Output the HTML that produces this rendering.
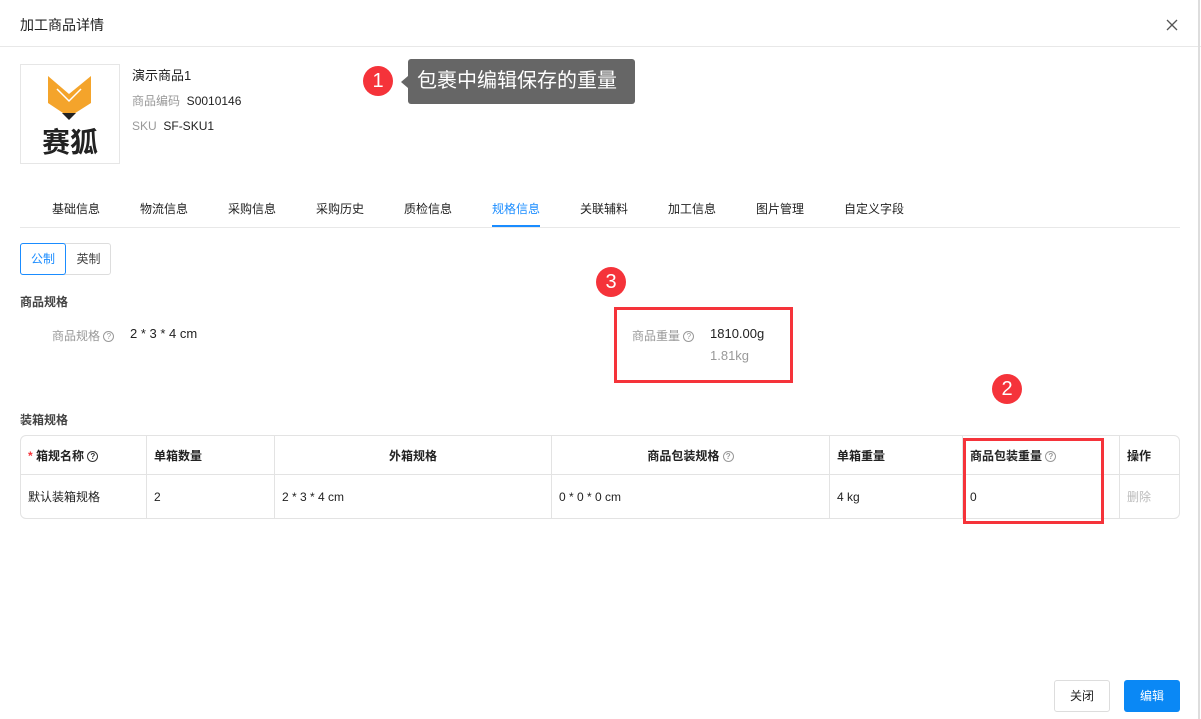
<!DOCTYPE html>
<html><head><meta charset="utf-8"><style>
*{box-sizing:border-box;margin:0;padding:0}
body{width:1201px;height:719px;background:#fff;font-family:"Liberation Sans","Noto Sans CJK SC",sans-serif;font-size:12px;color:#222;position:relative;overflow:hidden}
.a{position:absolute;white-space:nowrap}
.g{color:#999}
.q{display:inline-block;width:11px;height:11px;border:1px solid #999;border-radius:50%;font-size:8px;line-height:9px;text-align:center;color:#999;vertical-align:middle}
.badge{position:absolute;width:30px;height:30px;border-radius:50%;background:#f5333a;color:#fff;font-size:20px;line-height:30px;text-align:center}
.red{position:absolute;border:3px solid #f5333a}
table{position:absolute;left:20px;top:435px;width:1160px;border-collapse:separate;border-spacing:0;border:1px solid #e3e3e3;border-radius:6px}
td,th{border-right:1px solid #e3e3e3;padding:0 7px;text-align:left;font-size:12px}
th{height:39px;border-bottom:1px solid #e3e3e3;font-weight:bold}
td{height:43px}
td:last-child,th:last-child{border-right:none}
</style></head><body>
<div class="a" style="left:20px;top:15px;font-size:14px">加工商品详情</div>
<svg class="a" style="left:1166px;top:19px" width="12" height="12"><path d="M1 1L11 11M11 1L1 11" stroke="#555" stroke-width="1.3"/></svg>
<div class="a" style="left:0;top:46px;width:1201px;border-top:1px solid #e8e8e8"></div>
<div class="a" style="left:1198px;top:0;height:719px;border-left:2px solid #ddd"></div>
<div class="a" style="left:20px;top:64px;width:100px;height:100px;border:1px solid #e6e6e6">
<svg width="100" height="100" style="position:absolute;left:0;top:0"><path d="M27 11 L48 29 L70 11 L70 38 L48 52 L27 38Z" fill="#f4a42b"/><path d="M36 24 L48 36 L60 24" fill="none" stroke="#fff" stroke-width="1.5"/><path d="M41 48 L55 48 L48 55Z" fill="#222"/></svg>
<div class="a" style="left:21px;top:56px;font-size:28px;font-weight:bold;color:#222">赛狐</div></div>
<div class="a" style="left:132px;top:65px;font-size:13px">演示商品1</div>
<div class="a" style="left:132px;top:92px"><span class="g">商品编码</span>&nbsp; S0010146</div>
<div class="a" style="left:132px;top:119px"><span class="g">SKU</span>&nbsp; SF-SKU1</div>
<div class="badge" style="left:363px;top:66px">1</div>
<div class="a" style="left:401px;top:76px;border:6px solid transparent;border-right:7px solid #666;border-left:none"></div>
<div class="a" style="left:408px;top:59px;width:227px;height:45px;background:#666;border-radius:3px;color:#fff;font-size:20px;line-height:45px;padding-left:9px">包裹中编辑保存的重量</div>
<div class="a" style="left:20px;top:227px;width:1160px;border-top:1px solid #e8e8e8"></div>
<div class="a" style="left:52px;top:200px">基础信息</div>
<div class="a" style="left:140px;top:200px">物流信息</div>
<div class="a" style="left:228px;top:200px">采购信息</div>
<div class="a" style="left:316px;top:200px">采购历史</div>
<div class="a" style="left:404px;top:200px">质检信息</div>
<div class="a" style="left:492px;top:200px;color:#1a8cff">规格信息</div>
<div class="a" style="left:492px;top:225px;width:48px;height:2px;background:#1a8cff"></div>
<div class="a" style="left:580px;top:200px">关联辅料</div>
<div class="a" style="left:668px;top:200px">加工信息</div>
<div class="a" style="left:756px;top:200px">图片管理</div>
<div class="a" style="left:844px;top:200px">自定义字段</div>
<div class="a" style="left:20px;top:243px;width:91px;height:32px;border:1px solid #ddd;border-radius:3px"></div>
<div class="a" style="left:20px;top:243px;width:46px;height:32px;border:1px solid #1a8cff;border-radius:3px;color:#1a8cff;line-height:30px;text-align:center">公制</div>
<div class="a" style="left:66px;top:243px;width:45px;height:32px;line-height:32px;text-align:center;color:#444">英制</div>
<div class="a" style="left:20px;top:293px;font-weight:bold;color:#444">商品规格</div>
<div class="a" style="left:52px;top:327px"><span class="g">商品规格</span> <span class="q">?</span></div>
<div class="a" style="left:130px;top:326px;font-size:13px">2 * 3 * 4 cm</div>
<div class="badge" style="left:596px;top:267px">3</div>
<div class="red" style="left:614px;top:307px;width:179px;height:76px"></div>
<div class="a" style="left:632px;top:327px"><span class="g">商品重量</span> <span class="q">?</span></div>
<div class="a" style="left:710px;top:326px;font-size:13px">1810.00g</div>
<div class="a g" style="left:710px;top:348px;font-size:13px">1.81kg</div>
<div class="a" style="left:20px;top:411px;font-weight:bold;color:#444">装箱规格</div>
<div class="badge" style="left:992px;top:374px">2</div>
<table><tr><th style="width:126px"><span style="color:#f5333a">*</span> 箱规名称 <span class="q" style="border-color:#333;color:#333">?</span></th><th style="width:128px">单箱数量</th><th style="width:277px;text-align:center">外箱规格</th><th style="width:278px;text-align:center">商品包装规格 <span class="q">?</span></th><th style="width:133px">单箱重量</th><th style="width:157px">商品包装重量 <span class="q">?</span></th><th>操作</th></tr>
<tr><td>默认装箱规格</td><td>2</td><td>2 * 3 * 4 cm</td><td>0 * 0 * 0 cm</td><td>4 kg</td><td>0</td><td class="g" style="color:#bbb">删除</td></tr></table>
<div class="red" style="left:963px;top:438px;width:141px;height:86px"></div>
<div class="a" style="left:1054px;top:680px;width:56px;height:32px;border:1px solid #ddd;border-radius:3px;line-height:30px;text-align:center">关闭</div>
<div class="a" style="left:1124px;top:680px;width:56px;height:32px;background:#0a88f5;border-radius:3px;line-height:32px;text-align:center;color:#fff">编辑</div>
</body></html>
